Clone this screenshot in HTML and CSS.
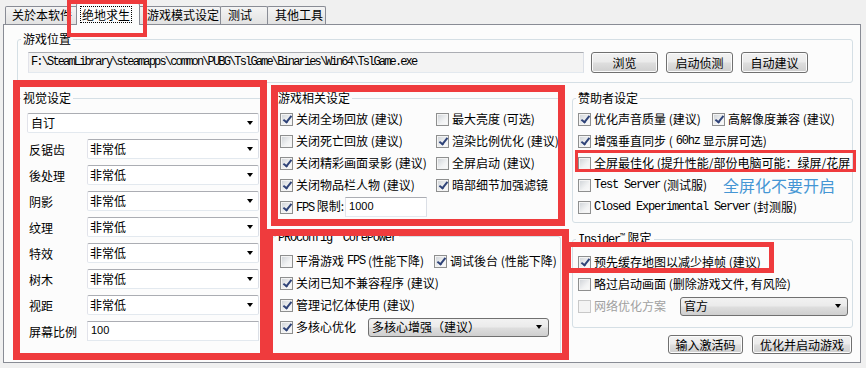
FILE: index.html
```html
<!DOCTYPE html>
<html lang="zh-CN">
<head>
<meta charset="utf-8">
<title>PUBG 设置</title>
<link rel="stylesheet" href="styles.css">
</head>
<body>
<div class="window">
  <div class="tabs">
    <div class="tab t1">关於本软件</div>
    <div class="tab t2 active"><span class="focus">绝地求生</span></div>
    <div class="tab t3">游戏模式设定</div>
    <div class="tab t4">测试</div>
    <div class="tab t5">其他工具</div>
  </div>
  <div class="panel">
    <fieldset class="group loc">
      <legend>游戏位置</legend>
      <div class="loc-row">
        <div class="path">F:\SteamLibrary\steamapps\common\PUBG\TslGame\Binaries\Win64\TslGame.exe</div>
        <div class="btn w67">浏览</div>
        <div class="btn w67">启动侦测</div>
        <div class="btn w67 last">自动建议</div>
      </div>
    </fieldset>
    <div class="cols">
      <fieldset class="group visual">
        <legend>视觉设定</legend>
        <div class="vbody">
          <div class="combo full"><span class="ctext">自订</span><span class="arr"></span></div>
          <div class="vrow"><span class="vlabel">反锯齿</span><div class="combo"><span class="ctext">非常低</span><span class="arr"></span></div></div>
          <div class="vrow"><span class="vlabel">後处理</span><div class="combo"><span class="ctext">非常低</span><span class="arr"></span></div></div>
          <div class="vrow"><span class="vlabel">阴影</span><div class="combo"><span class="ctext">非常低</span><span class="arr"></span></div></div>
          <div class="vrow"><span class="vlabel">纹理</span><div class="combo"><span class="ctext">非常低</span><span class="arr"></span></div></div>
          <div class="vrow"><span class="vlabel">特效</span><div class="combo"><span class="ctext">非常低</span><span class="arr"></span></div></div>
          <div class="vrow"><span class="vlabel">树木</span><div class="combo"><span class="ctext">非常低</span><span class="arr"></span></div></div>
          <div class="vrow"><span class="vlabel">视距</span><div class="combo"><span class="ctext">非常低</span><span class="arr"></span></div></div>
          <div class="vrow"><span class="vlabel">屏幕比例</span><div class="txt scale num">100</div></div>
        </div>
      </fieldset>
      <div class="col mid">
        <fieldset class="group game">
          <legend>游戏相关设定</legend>
          <div class="grid2 g-game">
            <div class="ck"><span class="cb on"></span>关闭全场回放 (建议)</div>
            <div class="ck"><span class="cb"></span>最大亮度 (可选)</div>
            <div class="ck"><span class="cb"></span>关闭死亡回放 (建议)</div>
            <div class="ck"><span class="cb on"></span>渲染比例优化 (建议)</div>
            <div class="ck"><span class="cb on"></span>关闭精彩画面录影 (建议)</div>
            <div class="ck"><span class="cb"></span>全屏启动 (建议)</div>
            <div class="ck"><span class="cb on"></span>关闭物品栏人物 (建议)</div>
            <div class="ck"><span class="cb on"></span>暗部细节加强滤镜</div>
            <div class="ck span"><span class="cb on"></span><span><span class="m">FPS</span> 限制:</span><div class="txt fps num">1000</div></div>
          </div>
        </fieldset>
        <fieldset class="group pro">
          <legend><span class="m">PROconfig<sup>™</sup> CorePower</span></legend>
          <div class="grid2 g-pro">
            <div class="ck"><span class="cb"></span>平滑游戏 <span class="m">FPS</span> (性能下降)</div>
            <div class="ck"><span class="cb on"></span>调试後台 (性能下降)</div>
            <div class="ck span"><span class="cb on"></span>关闭已知不兼容程序 (建议)</div>
            <div class="ck span"><span class="cb on"></span>管理记忆体使用 (建议)</div>
            <div class="ck span"><span class="cb on"></span>多核心优化<div class="ddl core"><span class="ctext">多核心增强（建议）</span><span class="arr"></span></div></div>
          </div>
        </fieldset>
      </div>
      <div class="col right">
        <fieldset class="group sponsor">
          <legend>赞助者设定</legend>
          <div class="grid2 g-sponsor">
            <div class="ck"><span class="cb on"></span>优化声音质量 (建议)</div>
            <div class="ck"><span class="cb on"></span>高解像度兼容 (建议)</div>
            <div class="ck span"><span class="cb on"></span>增强垂直同步 (<span class="m">60hz</span> 显示屏可选)</div>
            <div class="ck span"><span class="cb"></span>全屏最佳化 (提升性能/部份电脑可能：绿屏/花屏</div>
            <div class="ck span"><span class="cb"></span><span class="m">Test Server</span> (测试服)</div>
            <div class="ck span"><span class="cb"></span><span class="m">Closed Experimental Server</span> (封测服)</div>
          </div>
        </fieldset>
        <fieldset class="group insider">
          <legend><span class="m">Insider<sup>™</sup></span> 限定</legend>
          <div class="ibody">
            <div class="ck"><span class="cb on"></span>预先缓存地图以减少掉帧 (建议)</div>
            <div class="ck"><span class="cb"></span>略过启动画面 (删除游戏文件, 有风险)</div>
            <div class="ck dis"><span class="cb"></span>网络优化方案<div class="ddl net"><span class="ctext">官方</span><span class="arr"></span></div></div>
          </div>
        </fieldset>
        <div class="actions">
          <div class="btn w75">输入激活码</div>
          <div class="btn w100">优化并启动游戏</div>
        </div>
      </div>
    </div>
  </div>

  <div class="mark m0"></div>
  <div class="mark m1"></div>
  <div class="mark m2"></div>
  <div class="mark m3"></div>
  <div class="mark m4"></div>
  <div class="mark m5"></div>
  <div class="note">全屏化不要开启</div>
</div>
</body>
</html>
```
FILE: styles.css
```css
body {
  margin: 0;
  background: #f0f0f0;
  font: 12px/14px "Noto Sans CJK SC", sans-serif;
  color: #000;
}

.window {
  position: relative;
  width: 866px;
  height: 368px;
  overflow: hidden;
  background: #f0f0f0;
}

/* ---------- tabs ---------- */
.tabs {
  display: flex;
  align-items: flex-end;
  height: 24px;
  padding-left: 5px;
  position: relative;
  z-index: 2;
}
.tab {
  box-sizing: border-box;
  height: 18px;
  border: 1px solid #898c95;
  border-bottom: none;
  border-radius: 2px 2px 0 0;
  background: linear-gradient(#f4f4f4, #e2e2e2);
  line-height: 16px;
  margin-left: -1px;
  white-space: nowrap;
}
.tab.t1 { width: 74px; padding-left: 6px; margin-left: 0; }
.tab.t2 { width: 64px; padding-left: 4px; }
.tab.t3 { width: 84px; padding-left: 9px; }
.tab.t4 { width: 48px; padding-left: 7px; }
.tab.t5 { width: 59px; padding-left: 7px; }
.tab.active {
  height: 22px;
  margin-left: -3px;
  margin-right: -2px;
  margin-bottom: -1px;
  background: #fcfcfc;
  position: relative;
  z-index: 3;
  padding-top: 3px;
}
.focus {
  display: inline-block;
  outline: 1px dotted #000;
  line-height: 15px;
  padding: 0 1px;
}

/* ---------- panel ---------- */
.panel {
  box-sizing: border-box;
  margin-left: 3px;
  width: 858px;
  height: 339px;
  border: 1px solid #898c95;
  background: #fcfcfc;
  padding: 7px 0 0 13px;
}

fieldset.group {
  margin: 0;
  padding: 0 3px;
  border: 1px solid #d5dfe5;
  border-radius: 3px;
  box-sizing: border-box;
  min-width: 0;
}
fieldset.group legend {
  padding: 0 2px;
  height: 14px;
  line-height: 14px;
  white-space: nowrap;
}

.m {
  font-family: "Liberation Mono", monospace;
  letter-spacing: -1.2px;
}
.m sup {
  font-size: 8px;
  line-height: 0;
  letter-spacing: 0;
  vertical-align: 4px;
}
.num {
  font-family: "Liberation Sans", sans-serif;
  font-size: 11px;
}

/* location */
fieldset.loc { width: 836px; }
.loc-row {
  display: flex;
  padding: 6px 0 9px 7px;
}
.path {
  box-sizing: border-box;
  width: 556px;
  height: 21px;
  margin-right: 7px;
  border: 1px solid;
  border-color: #abadb3 #dbdfe6 #e3e9ef #e2e3ea;
  background: #f3f3f3;
  padding-left: 2px;
  line-height: 19px;
  font-family: "Liberation Mono", monospace;
  letter-spacing: -1.85px;
  white-space: nowrap;
  overflow: hidden;
}

.btn {
  box-sizing: border-box;
  height: 21px;
  border: 1px solid #707070;
  border-radius: 3px;
  background: linear-gradient(#f2f2f2 0%, #ebebeb 45%, #dddddd 55%, #cfcfcf 100%);
  box-shadow: inset 0 0 0 1px #fbfbfb;
  text-align: center;
  line-height: 19px;
  white-space: nowrap;
}
.w67 { width: 67px; margin-right: 8px; }
.w67.last { margin-right: 0; }
.w75 { width: 75px; }
.w100 { width: 100px; }

/* columns */
.cols {
  display: flex;
  margin-top: 8px;
  height: 265px;
}
fieldset.visual { width: 247px; margin-right: 8px; flex: none; }
.col { display: flex; flex-direction: column; flex: none; }
.mid { width: 289px; margin-right: 11px; }
.right { width: 281px; }

/* visual */
.vbody { padding: 8px 1px 0 6px; }
.combo {
  box-sizing: border-box;
  height: 20px;
  border: 1px solid #abadb3;
  border-color: #abadb3 #dbdfe6 #e3e9ef #e2e3ea;
  border-radius: 2px;
  background: #fff;
  display: flex;
  align-items: center;
  flex: 1;
  margin-bottom: 6px;
}
.combo .ctext { padding-left: 2px; line-height: 16px; }
.combo.full .ctext { padding-left: 3px; }
.arr {
  margin-left: auto;
  margin-right: 5px;
  width: 0;
  height: 0;
  border-left: 3.5px solid transparent;
  border-right: 3.5px solid transparent;
  border-top: 4px solid #000;
}
.vrow { display: flex; height: 20px; margin-bottom: 6px; }
.vrow .combo { margin-bottom: 0; }
.vlabel {
  width: 60px;
  padding-left: 2px;
  box-sizing: border-box;
  line-height: 21px;
  white-space: nowrap;
}
.txt {
  box-sizing: border-box;
  height: 20px;
  border: 1px solid;
  border-color: #abadb3 #dbdfe6 #e3e9ef #e2e3ea;
  background: #fff;
  padding-left: 3px;
  line-height: 17px;
}
.scale { flex: 1; }
.fps { width: 82px; margin-left: -2px; }

/* checkboxes */
.grid2 { display: grid; }
.g-game { grid-template-columns: 156px auto; padding: 3px 0 3px 4px; }
.g-pro { grid-template-columns: 154px auto; padding: 7px 0 0 4px; }
.g-sponsor { grid-template-columns: 134px auto; padding: 3px 0 4px 2px; }
.span { grid-column: 1 / -1; }

.ck {
  display: flex;
  align-items: center;
  height: 22px;
  gap: 3px;
  white-space: nowrap;
}
.cb {
  position: relative;
  flex: none;
  box-sizing: border-box;
  width: 13px;
  height: 13px;
  border: 1px solid #8e8f8f;
  background: linear-gradient(135deg, #cdd1d6 0%, #f1f2f3 60%, #fbfbfb 100%);
  box-shadow: inset 0 0 0 1px #f4f4f4;
}
.cb.on::after {
  content: "";
  position: absolute;
  left: 3.5px;
  top: 0.5px;
  width: 3px;
  height: 7px;
  border: solid #2f4378;
  border-width: 0 2px 2px 0;
  transform: rotate(38deg);
}
.ck.dis { color: #a0a0a0; }
.ck.dis .cb {
  border-color: #c8c8c8;
  background: #f4f4f4;
  box-shadow: none;
}

fieldset.pro { flex: 1; margin-top: 7px; }

.ddl {
  box-sizing: border-box;
  height: 19px;
  border: 1px solid #707070;
  border-radius: 3px;
  background: linear-gradient(#f2f2f2 0%, #ebebeb 45%, #dddddd 55%, #cfcfcf 100%);
  display: flex;
  align-items: center;
  color: #000;
}
.ddl .ctext { padding-left: 3px; line-height: 16px; }
.ddl .arr { margin-right: 6px; }
.core { width: 181px; margin-left: 9px; }
.net { width: 168px; margin-left: auto; margin-right: 1px; }

/* right */
fieldset.sponsor { padding-right: 0; }
fieldset.insider { margin-top: 9px; }
fieldset.insider legend {
  height: 12px;
  line-height: 12px;
  padding-bottom: 2px;
}
.ibody { padding: 5px 0 10px 2px; }
.actions {
  display: flex;
  justify-content: flex-end;
  gap: 9px;
  margin-top: 7px;
  padding-right: 1px;
}
.actions .btn { height: 19px; line-height: 17px; }

/* annotations */
.mark {
  position: absolute;
  box-sizing: border-box;
  border: 7px solid #ef3b3d;
  z-index: 5;
}
.m0 { left: 67px; top: 0; width: 80px; height: 37px; border-width: 4px; }
.m1 { left: 13px; top: 80px; width: 254px; height: 280px; }
.m2 { left: 271px; top: 85px; width: 294px; height: 141px; }
.m3 { left: 266px; top: 229px; width: 303px; height: 131px; }
.m4 { left: 566px; top: 242px; width: 208px; height: 31px; border-width: 5px; }
.m5 { left: 575px; top: 150px; width: 281px; height: 22px; border-width: 3px; }
.note {
  position: absolute;
  left: 723px;
  top: 175px;
  font-size: 16px;
  line-height: 20px;
  color: #4596d4;
  z-index: 5;
  white-space: nowrap;
}
```
